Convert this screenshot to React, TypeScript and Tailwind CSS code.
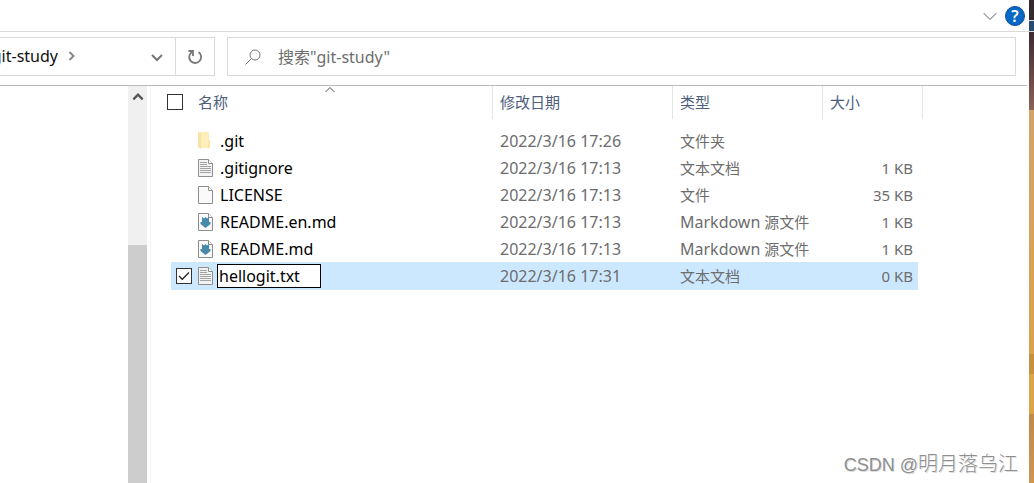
import type { ReactNode } from 'react';

type FileKind = 'folder' | 'text' | 'blank' | 'markdown';

interface FileEntry {
  name: string;
  kind: FileKind;
  modified: string;
  type: ReactNode;
  size: string;
  renaming?: boolean;
}

const markdownType = (
  <>
    <span className="text-base leading-6">Markdown</span> 源文件
  </>
);

const files: FileEntry[] = [
  { name: '.git', kind: 'folder', modified: '2022/3/16 17:26', type: '文件夹', size: '' },
  { name: '.gitignore', kind: 'text', modified: '2022/3/16 17:13', type: '文本文档', size: '1 KB' },
  { name: 'LICENSE', kind: 'blank', modified: '2022/3/16 17:13', type: '文件', size: '35 KB' },
  { name: 'README.en.md', kind: 'markdown', modified: '2022/3/16 17:13', type: markdownType, size: '1 KB' },
  { name: 'README.md', kind: 'markdown', modified: '2022/3/16 17:13', type: markdownType, size: '1 KB' },
  { name: 'hellogit.txt', kind: 'text', modified: '2022/3/16 17:31', type: '文本文档', size: '0 KB', renaming: true },
];

function Chevron({ d, className }: { d: string; className: string }) {
  return (
    <svg className={className} viewBox="0 0 12 12" fill="none" stroke="currentColor">
      <path d={d} />
    </svg>
  );
}

function FileIcon({ kind }: { kind: FileKind }) {
  if (kind === 'folder') {
    return (
      <svg className="h-[18px] w-[15px] shrink-0" viewBox="0 0 15 18">
        <path d="M0 0h11v16H3L0 15z" fill="#fdeebb" />
        <path d="M0 0l3 2v15l-3-2z" fill="#f9e3a2" />
        <path d="M10 8h2v8h-2z" fill="#fbe5a3" />
      </svg>
    );
  }
  return (
    <svg className="h-[18px] w-[15px] shrink-0" viewBox="0 0 15 18" fill="none">
      <path d="M.5.5h10l4 4v13H.5z" fill={kind === 'text' ? '#f3f3f3' : '#fafafa'} stroke="#8e8e8e" />
      <path d="M10.500.5v4h4" fill="#fff" stroke="#8e8e8e" />
      {kind === 'text' && <path d="M2 3.500h7M2 5.500h7M2 7.500h11M2 9.500h11M2 11.500h11M2 13.500h11" stroke="#a2a2a2" />}
      {kind === 'markdown' && <path d="M4 4l2 1.500L7.500 4 9 5.500 11 4v5h1.500v2L7.500 15 2.500 11V9H4z" fill="#4689a8" />}
    </svg>
  );
}

function Checkbox({ label, checked = false }: { label: string; checked?: boolean }) {
  return (
    <span className="relative block size-4 shrink-0">
      <input
        type="checkbox"
        aria-label={label}
        defaultChecked={checked}
        className="peer block size-4 appearance-none border border-[#333] bg-white"
      />
      <svg
        className="pointer-events-none absolute inset-0 hidden size-4 peer-checked:block"
        viewBox="0 0 16 16"
        fill="none"
        stroke="#222"
        strokeWidth="1.3"
      >
        <path d="M3 8l3.300 3.300L13 4.500" />
      </svg>
    </span>
  );
}

function AddressBar() {
  return (
    <div className="flex h-[54px] items-start gap-3 border-t border-[#d9d9d9] pt-[5px] pr-[13px]">
      <div className="flex h-[39px] w-[215px] shrink-0 border border-l-0 border-[#d9d9d9]">
        <button className="flex w-[58px] justify-end overflow-hidden pt-[7px] text-base leading-[22px] whitespace-nowrap text-[#111]">
          git-study
        </button>
        <Chevron d="M3.500 2l4 4-4 4" className="mt-3 ml-2 size-3 stroke-2 text-[#888]" />
        <button aria-label="历史记录" className="ml-auto flex w-[38px] items-center justify-center border-r border-[#d9d9d9]">
          <Chevron d="M1 4l5 5 5-5" className="size-3 stroke-2 text-[#777]" />
        </button>
        <button aria-label="刷新" className="flex w-[38px] items-center justify-center">
          <svg className="size-4" viewBox="0 0 16 16" fill="none" stroke="#777" strokeWidth="1.8">
            <path d="M11.500 3A6 6 0 1 1 5 2.900" />
            <path d="M1.500 2H6v5" />
          </svg>
        </button>
      </div>
      <label className="flex h-[39px] flex-1 items-center border border-[#d9d9d9] pl-[17px]">
        <svg className="size-4 shrink-0" viewBox="0 0 16 16" fill="none" stroke="#777">
          <circle cx="10" cy="6" r="5" />
          <path d="M6.500 9.500L.5 15.500" />
        </svg>
        <input
          type="search"
          aria-label="搜索"
          placeholder={'搜索"git-study"'}
          className="ml-[17px] min-w-0 flex-1 text-base leading-6 outline-none placeholder:text-[#6d6d6d]"
        />
      </label>
    </div>
  );
}

function FileRow({ file }: { file: FileEntry }) {
  const cell = file.renaming ? 'bg-[#cce8ff] p-0' : 'p-0';
  return (
    <tr className={file.renaming ? 'h-7' : 'h-[27px]'}>
      <td />
      <td className={cell}>
        <div className="flex items-center">
          <div className="w-[27px] shrink-0 pl-[5px]">{file.renaming && <Checkbox label={file.name} checked />}</div>
          <FileIcon kind={file.kind} />
          {file.renaming ? (
            <input
              aria-label="重命名"
              defaultValue={file.name}
              className="ml-1 h-6 w-[104px] border border-black bg-white px-px text-base text-black outline-none"
            />
          ) : (
            <span className="ml-[7px] text-base leading-6 text-black">{file.name}</span>
          )}
        </div>
      </td>
      <td className={`${cell} text-base leading-6`}>
        <div className="pl-[7px]">{file.modified}</div>
      </td>
      <td className={cell}>
        <div className="pl-[7px]">{file.type}</div>
      </td>
      <td className={`${cell} text-right`}>
        <div className="pr-[5px]">{file.size}</div>
      </td>
      <td />
    </tr>
  );
}

function FileTable() {
  const head = 'border-r border-[#e5e5e5] p-0 pb-[2px] pl-[7px] font-normal';
  return (
    <table className="w-[772px] table-fixed border-separate border-spacing-0 text-left text-[15px] leading-6 text-[#6d6d6d]">
      <colgroup>
        <col className="w-5" />
        <col className="w-[322px]" />
        <col className="w-[180px]" />
        <col className="w-[150px]" />
        <col className="w-[95px]" />
        <col className="w-[5px]" />
      </colgroup>
      <thead className="text-[#4c607a]">
        <tr className="h-[33px]">
          <th colSpan={2} className="border-r border-[#e5e5e5] p-0 pl-4 font-normal">
            <div className="relative flex h-[33px] items-center gap-[15px] pb-[2px]">
              <Checkbox label="全选" />
              名称
              <Chevron d="M1.500 8L6 3.500 10.500 8" className="absolute top-[-2px] left-1/2 size-3 -translate-x-1/2 text-[#555]" />
            </div>
          </th>
          <th className={head}>修改日期</th>
          <th className={head}>类型</th>
          <th colSpan={2} className={head}>大小</th>
        </tr>
      </thead>
      <tbody>
        <tr className="h-2">
          <td colSpan={6} className="p-0" />
        </tr>
        {files.map((file) => (
          <FileRow key={file.name} file={file} />
        ))}
      </tbody>
    </table>
  );
}

export default function App() {
  return (
    <div className="relative flex min-h-screen overflow-hidden bg-white font-['Noto_Sans','Noto_Sans_CJK_SC',sans-serif]">
      <div className="flex min-w-0 flex-1 flex-col">
        <div className="flex h-[31px] items-center justify-end gap-2 pr-1">
          <button aria-label="展开功能区">
            <Chevron d="M.5 3.500L6 9l5.500-5.500" className="size-[14px] text-[#999]" />
          </button>
          <button aria-label="帮助" className="size-5 rounded-full border border-[#0a4f94] bg-[#0669c8] text-center text-base leading-[18px] font-semibold text-white">
            ?
          </button>
        </div>
        <AddressBar />
        <div className="mr-[2px] flex flex-1 border-t border-[#bbb]">
          <nav className="w-32 shrink-0" />
          <div className="flex w-[19px] shrink-0 flex-col bg-[#f0f0f0]">
            <Chevron d="M2 8l4-4 4 4" className="mx-auto mt-1 size-[14px] stroke-2 text-[#555]" />
            <div className="mt-[141px] flex-1 bg-[#cdcdcd]" />
          </div>
          <main className="ml-[3px] min-w-0 flex-1 border-l border-[#f3f3f3]">
            <FileTable />
          </main>
        </div>
      </div>
      <aside className="flex w-[5px] shrink-0 flex-col">
        <div className="h-5 bg-[#33292f]" />
        <div className="h-3 border-y border-[#ddd] bg-[#294a70]" />
        <div className="h-[78px] bg-linear-to-b from-[#3e2b31] to-[#8d6259]" />
        <div className="h-[244px] bg-linear-to-b from-[#d3a268] to-[#dba14c]" />
        <div className="h-5 bg-[#c7903f]" />
        <div className="h-10 bg-[#dca34c]" />
        <div className="flex-1 bg-linear-to-b from-[#c08a4c] to-[#cf9551]" />
      </aside>
      <p className="absolute right-4 bottom-1 font-['Liberation_Sans','Noto_Sans_CJK_SC',sans-serif] text-lg leading-7 text-[#8f8f8f] [text-shadow:-1px_-1px_0_#fff,1px_1px_0_#ddd]">
        CSDN @<span className="text-xl font-light">明月落乌江</span>
      </p>
    </div>
  );
}
